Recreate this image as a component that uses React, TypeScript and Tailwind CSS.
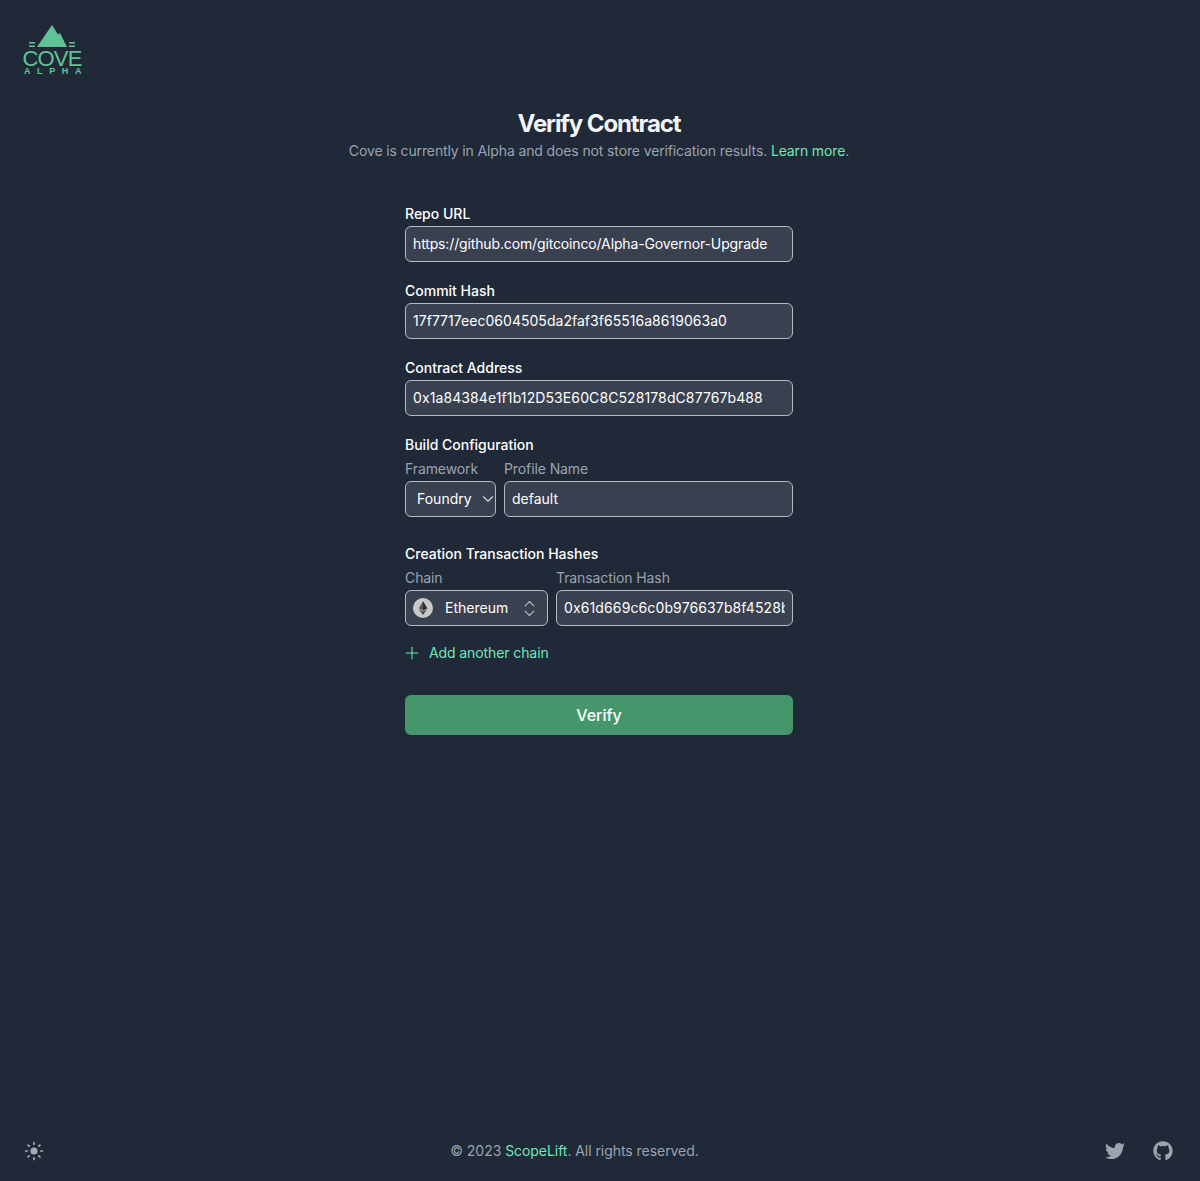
import { ChevronDown, ChevronsUpDown, Plus } from "lucide-react";
import { FaGithub, FaTwitter } from "react-icons/fa";

const boxClass =
  "block h-9 w-full rounded-md border border-[#b4bac4] bg-[#394150] px-[7px] text-sm text-white outline-none";
const inputClass = `${boxClass} mt-[2px] pb-[2px]`;
const subLabelClass = "block h-5 text-sm leading-5 tracking-[-0.1px] text-[#9ca3af]";

function Field({ label, value, tracking }: { label: string; value: string; tracking: string }) {
  return (
    <div>
      <label className="block h-5 text-sm font-medium leading-5 text-white">{label}</label>
      <input className={`${inputClass} ${tracking}`} defaultValue={value} />
    </div>
  );
}

function Logo() {
  return (
    <div className="flex w-[60px] flex-col items-center text-[#5fc395]">
      <svg width="60" height="23" viewBox="0 0 60 23" fill="currentColor">
        <path d="M14 22 L29 0 L35 9.5 L37 8 L44 22 Z" />
        <path d="M6 17h6v1.5H6zM6 20.5h6V22H6zM46 17h6v1.5h-6zM46 20.5h6V22h-6z" />
      </svg>
      <span className="mt-px -ml-[2px] text-[22px] font-normal leading-[20px] tracking-[-0.8px] [font-family:'Liberation_Sans',sans-serif]">
        COVE
      </span>
      <span className="-mt-px w-full pl-px text-[9px] font-bold leading-[7px] tracking-[6.6px] whitespace-nowrap [font-family:'Liberation_Sans',sans-serif]">
        ALPHA
      </span>
    </div>
  );
}

function EthIcon() {
  return (
    <svg width="20" height="20" viewBox="0 0 20 20" className="shrink-0">
      <circle cx="10" cy="10" r="10" fill="#c9c9c6" />
      <path d="M10 3.2 L5.8 10.2 L10 12.6 L14.2 10.2 Z" fill="#55555a" />
      <path d="M5.8 11.1 L10 17 L14.2 11.1 L10 13.5 Z" fill="#45454a" />
      <path d="M10 3.2 L14.2 10.2 L10 12.6 Z" fill="#2f2f33" />
    </svg>
  );
}

function SunIcon() {
  return (
    <svg width="20" height="20" viewBox="0 0 20 20" fill="none" stroke="currentColor" strokeWidth="1.7" strokeLinecap="round">
      <circle cx="10" cy="10" r="3.6" fill="currentColor" stroke="none" />
      <path d="M10 1.6v1.6M10 16.8v1.6M1.6 10h1.6M16.8 10h1.6M4.1 4.1l1.1 1.1M14.8 14.8l1.1 1.1M4.1 15.9l1.1-1.1M14.8 5.2l1.1-1.1" />
    </svg>
  );
}

export default function App() {
  return (
    <div className="flex min-h-screen flex-col bg-[#1f2937] font-['Inter',sans-serif] text-white">
      <header className="px-[23px] pt-[25px]">
        <Logo />
      </header>

      <main className="flex flex-1 flex-col items-center pt-[33px] pr-[2px]">
        <h1 className="text-2xl leading-8 font-bold tracking-[-1.1px] text-[#f3f4f6]">Verify Contract</h1>
        <p className="mt-px text-sm leading-5 tracking-[-0.13px] text-[#9ca3af]">
          Cove is currently in Alpha and does not store verification results.{" "}
          <a className="text-[#6ee7b7]">Learn more</a>.
        </p>

        <form className="mt-[43px] flex w-[388px] flex-col">
          <div className="flex flex-col gap-[19px]">
            <Field
              label="Repo URL"
              value="https://github.com/gitcoinco/Alpha-Governor-Upgrade"
              tracking="tracking-[-0.14px]"
            />
            <Field
              label="Commit Hash"
              value="17f7717eec0604505da2faf3f65516a8619063a0"
              tracking="tracking-[0.03px]"
            />
            <Field
              label="Contract Address"
              value="0x1a84384e1f1b12D53E60C8C528178dC87767b488"
              tracking="tracking-[0.1px]"
            />
          </div>

          <div className="mt-[19px]">
            <p className="h-5 text-sm font-medium leading-5">Build Configuration</p>
            <div className="mt-[4px] flex gap-2">
              <div className="w-[91px]">
                <label className={subLabelClass}>Framework</label>
                <div className="relative mt-[2px]">
                  <select className={`${boxClass} appearance-none pl-[11px]`} defaultValue="Foundry">
                    <option>Foundry</option>
                    <option>Hardhat</option>
                  </select>
                  <ChevronDown
                    className="pointer-events-none absolute top-[9px] -right-px h-[18px] w-[18px] text-[#d1d5db]"
                    strokeWidth={1.5}
                  />
                </div>
              </div>
              <div className="flex-1">
                <label className={subLabelClass}>Profile Name</label>
                <input className={inputClass} defaultValue="default" />
              </div>
            </div>
          </div>

          <div className="mt-[27px]">
            <p className="h-5 text-sm font-medium leading-5">Creation Transaction Hashes</p>
            <div className="mt-[4px] flex gap-2">
              <div className="w-[143px]">
                <label className={subLabelClass}>Chain</label>
                <div className={`${boxClass} mt-[2px] flex items-center`}>
                  <EthIcon />
                  <span className="ml-3 flex-1 text-sm">Ethereum</span>
                  <ChevronsUpDown className="h-[21px] w-[21px] text-[#b4bac4]" strokeWidth={1.25} />
                </div>
              </div>
              <div className="flex-1">
                <label className={subLabelClass}>Transaction Hash</label>
                <input
                  className={`${inputClass} tracking-[0.12px]`}
                  defaultValue="0x61d669c6c0b976637b8f4528b0e9e4a1cf0f9a2e"
                />
              </div>
            </div>
          </div>

          <button
            type="button"
            className="mt-[17px] -ml-[3px] flex h-5 items-center gap-[7px] text-sm tracking-[-0.1px] text-[#6ee7b7]"
          >
            <Plus className="h-5 w-5" strokeWidth={1.25} />
            Add another chain
          </button>

          <button
            type="button"
            className="mt-[32px] h-10 w-full rounded-md bg-[#45976b] text-base font-medium text-white"
          >
            Verify
          </button>
        </form>
      </main>

      <footer className="flex items-center justify-between px-6 pb-[20px]">
        <span className="text-[#a3aab6]">
          <SunIcon />
        </span>
        <p className="text-sm leading-5 tracking-[-0.05px] text-[#9ca3af]">
          © 2023 <a className="text-[#6ee7b7]">ScopeLift</a>. All rights reserved.
        </p>
        <div className="flex items-center gap-[28px] pr-[3px] text-[#9ca3af]">
          <FaTwitter className="h-5 w-5" />
          <FaGithub className="h-5 w-5" />
        </div>
      </footer>
    </div>
  );
}
